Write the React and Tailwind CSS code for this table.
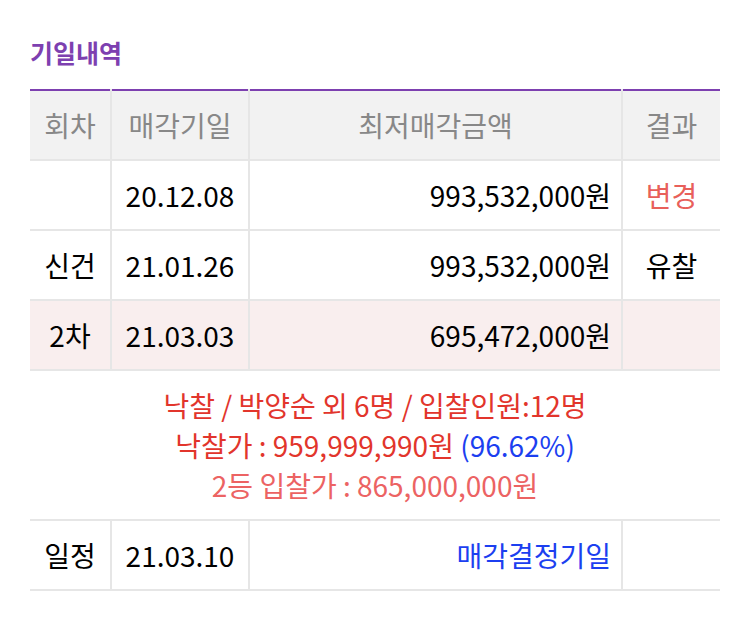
export default function App() {
  const rows = [
    { round: "", date: "20.12.08", price: "993,532,000원", result: "변경", resultClass: "text-[#e8605a]" },
    { round: "신건", date: "21.01.26", price: "993,532,000원", result: "유찰", resultClass: "text-black" },
    { round: "2차", date: "21.03.03", price: "695,472,000원", result: "", resultClass: "", highlight: true },
  ];

  return (
    <div className="bg-white w-[750px] h-[617px] px-[30px] pt-[34px]" style={{ fontFamily: '"Noto Sans CJK KR", "Noto Sans", sans-serif' }}>
      <h2 className="text-[25px] font-bold text-[#7d40b0] leading-[36px] mb-[19px]">기일내역</h2>

      <table className="w-full border-collapse border-t-2 border-[#7d40b0] text-[28px]">
        <thead>
          <tr className="bg-[#f2f2f2] text-[#888] h-[70px] border-b-2 border-[#e6e6e6]">
            <th className="w-[81px] font-normal border-r-2 border-[#e6e6e6]">회차</th>
            <th className="w-[138px] font-normal border-r-2 border-[#e6e6e6]">매각기일</th>
            <th className="font-normal border-r-2 border-[#e6e6e6]">최저매각금액</th>
            <th className="w-[98px] font-normal">결과</th>
          </tr>
        </thead>
        <tbody className="text-black">
          {rows.map((r) => (
            <tr key={r.date} className={`h-[70px] border-b-2 border-[#e6e6e6] ${r.highlight ? "bg-[#f9eeee]" : ""}`}>
              <td className="text-center border-r-2 border-[#e6e6e6]">{r.round}</td>
              <td className="text-center border-r-2 border-[#e6e6e6]">{r.date}</td>
              <td className="text-right pr-[10px] border-r-2 border-[#e6e6e6]">{r.price}</td>
              <td className={`text-center ${r.resultClass}`}>{r.result}</td>
            </tr>
          ))}
          <tr className="border-b-2 border-[#e6e6e6]">
            <td colSpan={4} className="text-center py-[14px] leading-[40px]">
              <div className="text-[#e2352c]">낙찰 / 박양순 외 6명 / 입찰인원:12명</div>
              <div className="text-[#e2352c]">
                낙찰가 : 959,999,990원 <span className="text-[#1c3ff0]">(96.62%)</span>
              </div>
              <div className="text-[#ec6363]">2등 입찰가 : 865,000,000원</div>
            </td>
          </tr>
          <tr className="h-[70px] border-b-2 border-[#e6e6e6]">
            <td className="text-center border-r-2 border-[#e6e6e6]">일정</td>
            <td className="text-center border-r-2 border-[#e6e6e6]">21.03.10</td>
            <td className="text-right pr-[10px] border-r-2 border-[#e6e6e6] text-[#1c3ff0]">매각결정기일</td>
            <td></td>
          </tr>
        </tbody>
      </table>
    </div>
  );
}
